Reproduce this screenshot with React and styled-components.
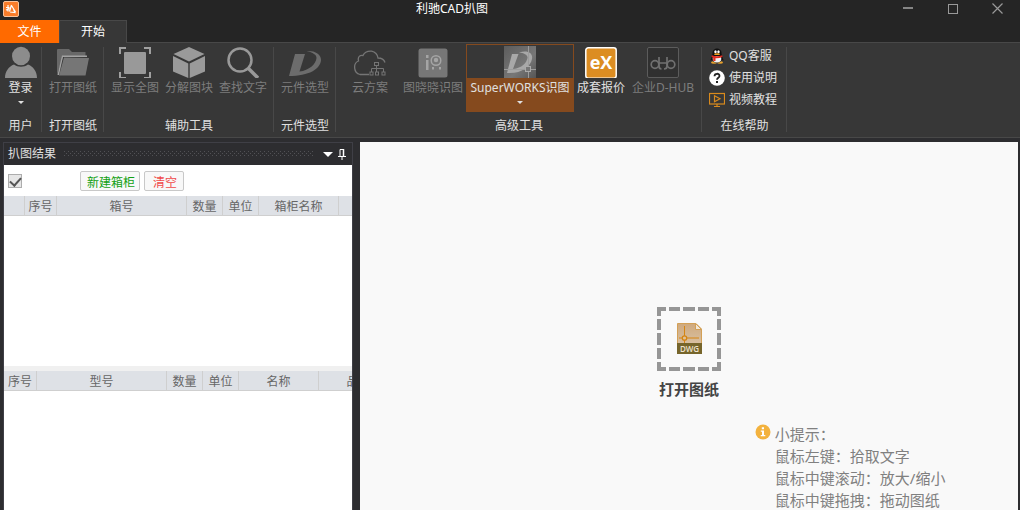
import styled, { createGlobalStyle } from "styled-components";

function AppLogo() {
    return (
        <svg width="16" height="16" viewBox="0 0 16 16" fill="none">
            <rect x="0.5" y="0.5" width="15" height="15" rx="1.5" fill="#fa7d2a" stroke="#f9c39c" />
            <path d="M3 6.500H6.500M5 4V10.500M3 9L6.500 7.500M8.500 4L6.500 10.500M8.500 4.500L12.500 11M7 11L12 11.500L10.500 8.500" stroke="#fff" strokeWidth="1.200" />
        </svg>
    )
}

function UserIcon() {
    return (
        <svg width="32" height="32" viewBox="0 0 32 32" fill="#8c8c8c">
            <ellipse cx="16" cy="10" rx="9" ry="9.3" />
            <path d="M0 32C0 25 4 20.500 9 18.500C13 21.500 19 21.500 23 18.500C28 20.500 32 25 32 32Z" />
        </svg>
    )
}

function FolderIcon() {
    return (
        <svg width="32" height="32" viewBox="0 0 32 32">
            <path d="M0 29V3.500L1 3H12L15 6H28.500V11H6L0 29Z" fill="#686868" />
            <path d="M6 11H30V9.500H5L0.500 29H2Z" fill="#a2a2a2" />
            <path d="M7 11.500L32 12L28.500 29.500H2Z" fill="#767676" />
        </svg>
    )
}

function FullViewIcon() {
    return (
        <svg width="32" height="32" viewBox="0 0 32 32">
            <rect x="5" y="6" width="22" height="22" rx="1" fill="#999" />
            <path d="M1 8V2H7M25 2H31V8M31 26V32H25M7 32H1V26" fill="none" stroke="#a0a0a0" strokeWidth="2" />
        </svg>
    )
}

function CubeIcon() {
    return (
        <svg width="32" height="32" viewBox="0 0 32 32" fill="#9a9a9a">
            <path d="M16 1L31.500 8L16 15.500L0.500 8Z" />
            <path d="M0 10L15.300 17.500V32L0 25.500Z" />
            <path d="M32 10L16.700 17.500V32L32 25.500Z" />
        </svg>
    )
}

function SearchIcon() {
    return (
        <svg width="32" height="32" viewBox="0 0 32 32" fill="none" stroke="#999">
            <circle cx="13" cy="14" r="11.500" strokeWidth="2.500" />
            <path d="M21 22L31 32" strokeWidth="3.500" />
        </svg>
    )
}

function SwooshIcon() {
    return (
        <svg width="32" height="32" viewBox="0 0 32 32" fill="#6c6c6c">
            <path d="M6 8H16L10.500 25.500C20 24.500 27 18 27.500 12C27.700 9 24 6.500 17.500 5C26 4.500 32 8 32 14C31.500 23 20 30 0 30Z" />
        </svg>
    )
}

function CloudIcon() {
    return (
        <svg width="32" height="32" viewBox="0 0 32 32" fill="none" stroke="#757575">
            <path d="M15 28.500H6C2.500 27.500 0.600 24.500 0.600 21C0.600 18 2 16 4.500 15C3.500 10.500 6 9 9 9.500C10.500 6 14 5 17.500 5.200C21 6 23.500 8.500 24 12C28 12 30 13.500 31 16.500" strokeWidth="1.300" />
            <rect x="20.500" y="16.500" width="4" height="3" />
            <path d="M22.500 19.500V26M17.500 26V22.500H29.500V26" />
            <rect x="16" y="26" width="3" height="3" />
            <rect x="21.500" y="26" width="3" height="3" />
            <rect x="28" y="26" width="3" height="3" />
        </svg>
    )
}

function RecognizeIcon() {
    return (
        <svg width="32" height="32" viewBox="0 0 32 32">
            <rect x="1.500" y="2.500" width="29" height="29" rx="2.500" fill="#777" />
            <path d="M9 9H11.500V12H9ZM9 14H11.500V24H9Z" fill="#a5a5a5" />
            <circle cx="19" cy="14.500" r="4.800" fill="none" stroke="#a5a5a5" strokeWidth="1.500" />
            <circle cx="19" cy="14" r="2.200" fill="#a5a5a5" />
            <path d="M15 21H17V23.500H15ZM22 21H24V23.500H22Z" fill="#a5a5a5" />
        </svg>
    )
}

function SuperWorksIcon() {
    return (
        <svg width="32" height="32" viewBox="0 0 32 32">
            <defs>
                <linearGradient id="plate" x1="0" y1="0" x2="1" y2="1">
                    <stop offset="0" stopColor="#5c5c5c" />
                    <stop offset="0.6" stopColor="#777" />
                    <stop offset="1" stopColor="#555" />
                </linearGradient>
            </defs>
            <rect width="32" height="32" fill="url(#plate)" />
            <path d="M8 8H14.500L9 23C18 22 22.500 17 23.500 12C24 9 20 7 15 6.500C24 4 29 7 28 13C26.500 21 17 28 3 27Z" fill="#a8a8a8" />
            <path d="M24.500 0V32M0 23.500H32" stroke="#9c9c9c" />
            <rect x="21.500" y="20.500" width="5" height="5" fill="#777" stroke="#aaa" />
        </svg>
    )
}

function QuoteIcon() {
    return (
        <svg width="32" height="32" viewBox="0 0 32 32">
            <rect x="0.800" y="1.800" width="30.400" height="30.400" rx="2.500" fill="#dc8d22" stroke="#fff" strokeWidth="1.500" />
            <text x="16" y="23" textAnchor="middle" fontFamily="Open Sans, sans-serif" fontSize="18" fontWeight="700" fill="#fff">eX</text>
        </svg>
    )
}

function HubIcon() {
    return (
        <svg width="32" height="32" viewBox="0 0 32 32" fill="none" stroke="#707070">
            <rect x="0.500" y="1.500" width="31" height="30" rx="1.500" fill="#303030" stroke="#5c5c5c" />
            <circle cx="8" cy="18.500" r="3.800" strokeWidth="1.700" />
            <path d="M12 11V20Q12 23 14.500 23M12 17H20M17 23Q20 23 20 20V11" strokeWidth="1.700" />
            <circle cx="24" cy="18.500" r="3.800" strokeWidth="1.700" />
        </svg>
    )
}

function QQIcon() {
    return (
        <svg width="16" height="16" viewBox="0 0 16 16">
            <ellipse cx="5" cy="14.500" rx="3" ry="1.300" fill="#e8a02c" />
            <ellipse cx="11" cy="14.500" rx="3" ry="1.300" fill="#e8a02c" />
            <path d="M3 9L1.200 12.500L3.500 12ZM13 9L14.800 12.500L12.500 12Z" fill="#111" />
            <ellipse cx="8" cy="9.500" rx="5.500" ry="5.200" fill="#111" />
            <ellipse cx="8" cy="10.800" rx="4.300" ry="3.800" fill="#f4f4f4" />
            <path d="M3.500 5C3.500 -1 12.500 -1 12.500 5V8H3.500Z" fill="#111" />
            <ellipse cx="6.500" cy="3.700" rx="1.200" ry="1.500" fill="#fff" />
            <ellipse cx="9.500" cy="3.700" rx="1.200" ry="1.500" fill="#fff" />
            <ellipse cx="8" cy="6.200" rx="3" ry="0.900" fill="#f0a020" />
            <path d="M2.800 7.200Q8 9.500 13.200 7.200L13.500 9Q10 10.500 6.500 10.300V13H4.200V9.800L2.500 9Z" fill="#e02b20" />
        </svg>
    )
}

function HelpIcon() {
    return (
        <svg width="16" height="16" viewBox="0 0 16 16" fill="none">
            <circle cx="8" cy="8" r="7.800" fill="#fff" />
            <path d="M5.500 6.200C5.500 3 10.500 3 10.500 6C10.500 7.800 8 7.800 8 9.700" stroke="#222" strokeWidth="1.800" />
            <rect x="7" y="11" width="2" height="2" fill="#222" />
        </svg>
    )
}

function VideoIcon() {
    return (
        <svg width="16" height="16" viewBox="0 0 16 16" fill="none" stroke="#d98a1d">
            <rect x="0.500" y="1.500" width="15" height="10.500" strokeWidth="1.200" />
            <path d="M5.500 3.800L11 6.800L5.500 9.800ZM8 12V14M5 14.500H11" strokeWidth="1.200" />
        </svg>
    )
}

function PinIcon() {
    return (
        <svg width="8" height="11" viewBox="0 0 8 11" fill="none" stroke="#fff">
            <path d="M2 7V0.500H5.500V7" />
            <path d="M5.500 0V7" strokeWidth="1.500" />
            <path d="M0 7.500H8M4 7.500V11" />
        </svg>
    )
}

function DropArea() {
    const dashes = "9 3 11 3 12 3 11 3 9"
    return (
        <svg width="64" height="64" viewBox="0 0 64 64">
            <defs>
                <linearGradient id="paper" x1="0" y1="0" x2="0" y2="1">
                    <stop offset="0" stopColor="#cfa97d" />
                    <stop offset="1" stopColor="#dccbb5" />
                </linearGradient>
            </defs>
            <g stroke="#969696" strokeWidth="4" strokeDasharray={dashes}>
                <path d="M0 2H64" />
                <path d="M0 62H64" />
                <path d="M2 0V64" />
                <path d="M62 0V64" />
            </g>
            <path d="M20.500 16.500H39L44.500 22V46.500H20.500Z" fill="url(#paper)" stroke="#d3a056" />
            <path d="M38.500 16.500V22.500H44.500Z" fill="#f3e8d8" stroke="#d3a056" />
            <path d="M27.500 19V36M22 31H42" stroke="#d58412" />
            <circle cx="27.500" cy="31" r="2.200" fill="#dfc29a" stroke="#d58412" strokeWidth="1.300" />
            <rect x="20" y="36" width="25" height="11" fill="#76652b" />
            <text x="32.500" y="44.500" textAnchor="middle" fontFamily="Open Sans, sans-serif" fontSize="8" fontWeight="600" fill="#eee3cf">DWG</text>
        </svg>
    )
}

function InfoIcon() {
    return (
        <svg width="16" height="17" viewBox="0 0 16 17">
            <circle cx="8" cy="9" r="7.500" fill="#f3b23e" />
            <path d="M6.800 4.200H9V6.200H6.800ZM5.800 7.500H9V12H10.300V13.300H5.700V12H7V8.700H5.800Z" fill="#fff" />
        </svg>
    )
}

const groups = [
    { title: "用户", items: [{ label: "登录", icon: <UserIcon />, width: 37, enabled: true, arrow: true }] },
    { title: "打开图纸", items: [{ label: "打开图纸", icon: <FolderIcon />, width: 54 }] },
    {
        title: "辅助工具",
        items: [
            { label: "显示全图", icon: <FullViewIcon />, width: 54 },
            { label: "分解图块", icon: <CubeIcon />, width: 54 },
            { label: "查找文字", icon: <SearchIcon />, width: 54 },
        ],
    },
    { title: "元件选型", items: [{ label: "元件选型", icon: <SwooshIcon />, width: 54 }] },
    {
        title: "高级工具",
        items: [
            { label: "云方案", icon: <CloudIcon />, width: 60 },
            { label: "图晓晓识图", icon: <RecognizeIcon />, width: 66 },
            { label: "SuperWORKS识图", icon: <SuperWorksIcon />, width: 108, enabled: true, active: true, arrow: true },
            { label: "成套报价", icon: <QuoteIcon />, width: 54, enabled: true },
            { label: "企业D-HUB", icon: <HubIcon />, width: 70 },
        ],
    },
]

const helpLinks = [
    { label: "QQ客服", icon: <QQIcon /> },
    { label: "使用说明", icon: <HelpIcon /> },
    { label: "视频教程", icon: <VideoIcon /> },
]

const boxColumns = [
    { label: "", width: 21 },
    { label: "序号", width: 32 },
    { label: "箱号", width: 130 },
    { label: "数量", width: 36 },
    { label: "单位", width: 36 },
    { label: "箱柜名称", width: 80 },
    { label: "", width: 80 },
]

const partColumns = [
    { label: "序号", width: 33 },
    { label: "型号", width: 130 },
    { label: "数量", width: 36 },
    { label: "单位", width: 36 },
    { label: "名称", width: 80 },
    { label: "品牌", width: 80 },
]

function Grid({ columns }) {
    return (
        <Table>
            <thead>
                <tr>
                    {columns.map((col, i) => (
                        <HeadCell key={i} $width={col.width}>{col.label}</HeadCell>
                    ))}
                </tr>
            </thead>
        </Table>
    )
}

export default function App() {
    return (
        <Window>
            <GlobalStyle />
            <TitleBar>
                <LogoBox><AppLogo /></LogoBox>
                <Title>利驰CAD扒图</Title>
                <WindowButton aria-label="最小化">
                    <svg width="10" height="11" viewBox="0 0 10 11"><path d="M0 5H10" stroke="#858585" strokeWidth="2" /></svg>
                </WindowButton>
                <WindowButton aria-label="最大化">
                    <svg width="10" height="10" viewBox="0 0 10 10"><rect x="0.500" y="0.500" width="9" height="9" fill="none" stroke="#999" /></svg>
                </WindowButton>
                <WindowButton aria-label="关闭">
                    <svg width="11" height="11" viewBox="0 0 11 11"><path d="M0.500 0.500L10.500 10.500M10.500 0.500L0.500 10.500" stroke="#999" strokeWidth="1.200" /></svg>
                </WindowButton>
            </TitleBar>

            <TabRow>
                <FileTab>文件</FileTab>
                <StartTab>开始</StartTab>
            </TabRow>

            <Ribbon>
                {groups.map((group) => (
                    <Group key={group.title}>
                        <Tools>
                            {group.items.map((item) => (
                                <ToolButton key={item.label} $width={item.width} $active={item.active} disabled={!item.enabled}>
                                    <ToolIcon>{item.icon}</ToolIcon>
                                    <ToolText $active={item.active}>
                                        {item.label}
                                        {item.arrow && <Arrow $size={3} />}
                                    </ToolText>
                                </ToolButton>
                            ))}
                        </Tools>
                        <Caption>{group.title}</Caption>
                    </Group>
                ))}
                <Group>
                    <HelpList>
                        {helpLinks.map((link) => (
                            <HelpLink key={link.label} href="#">{link.icon}{link.label}</HelpLink>
                        ))}
                    </HelpList>
                    <Caption>在线帮助</Caption>
                </Group>
            </Ribbon>

            <Workspace>
                <Panel>
                    <PanelHeader>
                        扒图结果
                        <Grip />
                        <PanelButton aria-label="菜单"><Arrow $size={5} /></PanelButton>
                        <PanelButton aria-label="固定"><PinIcon /></PanelButton>
                    </PanelHeader>
                    <PanelTools>
                        <CheckBox type="checkbox" aria-label="全选" defaultChecked />
                        <SmallButton $color="#12a012" $width={60}>新建箱柜</SmallButton>
                        <SmallButton $color="#f04a4a" $width={40}>清空</SmallButton>
                    </PanelTools>
                    <TablePane $grow={55}><Grid columns={boxColumns} /></TablePane>
                    <Splitter />
                    <TablePane $grow={45}><Grid columns={partColumns} /></TablePane>
                </Panel>

                <Canvas>
                    <OpenButton>
                        <DropArea />
                        打开图纸
                    </OpenButton>
                    <Tips>
                        <InfoIcon />
                        <div>
                            <TipLine>小提示：</TipLine>
                            <TipLine>鼠标左键：拾取文字</TipLine>
                            <TipLine>鼠标中键滚动：放大/缩小</TipLine>
                            <TipLine>鼠标中键拖拽：拖动图纸</TipLine>
                        </div>
                    </Tips>
                </Canvas>
            </Workspace>
        </Window>
    )
}

const GlobalStyle = createGlobalStyle`
    * {
        box-sizing: border-box;
    }
    body {
        margin: 0;
        background: #2d2d30;
    }
    body, button, input {
        font-family: "Noto Sans", "Noto Sans CJK SC", sans-serif;
        font-size: 12px;
        line-height: 18px;
    }
    button {
        padding: 0;
        border: 0;
        background: none;
        color: inherit;
        white-space: nowrap;
    }
    svg {
        display: block;
        flex-shrink: 0;
    }
`

const Window = styled.div`
    display: flex;
    flex-direction: column;
    height: 100vh;
    overflow: hidden;
    color: #e0e0e0;
`

const TitleBar = styled.header`
    display: flex;
    height: 20px;
    background: #252525;
`

const LogoBox = styled.div`
    padding: 1px 0 0 3px;
`

const Title = styled.div`
    flex: 1;
    text-align: center;
    color: #fff;
`

const WindowButton = styled.button`
    display: flex;
    align-items: center;
    justify-content: center;
    width: 45px;
    height: 17px;
`

const TabRow = styled.nav`
    display: flex;
    height: 23px;
    background: #252525;
    border-bottom: 1px solid #484848;
`

const FileTab = styled.button`
    width: 59px;
    height: 23px;
    background: #ff6a00;
    color: #fff;
`

const StartTab = styled.button`
    width: 68px;
    height: 23px;
    background: #373737;
    border: solid #484848;
    border-width: 1px 1px 0;
    color: #fff;
`

const Ribbon = styled.div`
    display: flex;
    height: 95px;
    flex-shrink: 0;
    background: #373737;
    border-bottom: 1px solid #484848;
`

const Group = styled.section`
    position: relative;
    margin-right: 1px;
    padding: 1px 3px 2px 4px;
    &:first-child {
        padding-left: 2px;
        padding-right: 2px;
    }
    &::after {
        content: "";
        position: absolute;
        top: 4px;
        right: -1px;
        bottom: 5px;
        width: 1px;
        background: #484848;
    }
`

const Tools = styled.div`
    display: flex;
`

const ToolButton = styled.button`
    display: flex;
    flex-direction: column;
    width: ${(p) => p.$width}px;
    height: 68px;
    border: 1px solid ${(p) => (p.$active ? "#854a1e" : "transparent")};
    color: #e0e0e0;
    &:disabled {
        color: #7d7d7d;
    }
`

const ToolIcon = styled.span`
    display: flex;
    align-items: flex-end;
    justify-content: center;
    width: 100%;
    height: 33px;
`

const ToolText = styled.span`
    display: flex;
    flex-direction: column;
    align-items: center;
    gap: 4px;
    width: 100%;
    flex: 1;
    padding-top: 1px;
    background: ${(p) => (p.$active ? "#854a1e" : "none")};
`

const Arrow = styled.span`
    width: 0;
    height: 0;
    border: ${(p) => p.$size}px solid transparent;
    border-top-color: currentColor;
    border-bottom: 0;
`

const Caption = styled.div`
    margin-top: 5px;
    text-align: center;
`

const HelpList = styled.div`
    display: flex;
    flex-direction: column;
    gap: 4px;
    height: 68px;
    padding: 3px 6px 0 3px;
`

const HelpLink = styled.a`
    display: flex;
    align-items: center;
    gap: 4px;
    color: inherit;
    text-decoration: none;
`

const Workspace = styled.div`
    display: flex;
    flex: 1;
    gap: 7px;
    min-height: 0;
    padding: 4px 2px 0 3px;
    background: #2d2d30;
`

const Panel = styled.aside`
    display: flex;
    flex-direction: column;
    width: 350px;
    flex-shrink: 0;
    border: solid #3f3f46;
    border-width: 1px 1px 0;
`

const PanelHeader = styled.div`
    display: flex;
    align-items: center;
    height: 22px;
    padding: 0 3px 0 4px;
`

const Grip = styled.div`
    flex: 1;
    height: 6px;
    margin: 0 8px;
    background-image: conic-gradient(at 1px 1px, transparent 75%, #515155 0), conic-gradient(at 1px 1px, transparent 75%, #515155 0);
    background-position: 0 0, 2px 2px;
    background-size: 4px 4px;
`

const PanelButton = styled.button`
    display: flex;
    align-items: center;
    justify-content: center;
    width: 14px;
    height: 16px;
    color: #fff;
`

const PanelTools = styled.div`
    display: flex;
    align-items: center;
    gap: 4px;
    height: 31px;
    padding: 0 4px;
    background: #fff;
`

const CheckBox = styled.input`
    appearance: none;
    display: flex;
    justify-content: center;
    width: 14px;
    height: 14px;
    margin: 0 54px 0 0;
    border: 1px solid #adadad;
    background: #e6e6e6;
    &:checked::after {
        content: "";
        width: 5px;
        height: 9px;
        border: solid #555;
        border-width: 0 2px 2px 0;
        transform: rotate(42deg);
    }
`

const SmallButton = styled.button`
    width: ${(p) => p.$width}px;
    height: 20px;
    padding: 2px 0 0 2px;
    border: 1px solid #c8c8c8;
    border-radius: 2px;
    background: #f8f8f8;
    color: ${(p) => p.$color};
`

const TablePane = styled.div`
    flex: ${(p) => p.$grow} 1 0;
    min-height: 0;
    overflow: hidden;
    background: #fff;
`

const Splitter = styled.div`
    height: 5px;
    background: #f0f0f0;
`

const Table = styled.table`
    border-spacing: 0;
    table-layout: fixed;
    width: max-content;
`

const HeadCell = styled.th`
    width: ${(p) => p.$width}px;
    min-width: ${(p) => p.$width}px;
    height: 20px;
    padding: 2px 0 0;
    border: solid #cfcfcf;
    border-width: 0 1px 1px 0;
    background: #dee1e6;
    color: #666;
    font-weight: 400;
    line-height: 17px;
`

const Canvas = styled.main`
    flex: 1;
    padding-top: 165px;
    overflow: hidden;
    background: #f9f9f9;
`

const OpenButton = styled.button`
    display: flex;
    flex-direction: column;
    align-items: center;
    gap: 7px;
    margin: 0 auto;
    color: #444;
    font-size: 15px;
    font-weight: 700;
    line-height: 22px;
`

const Tips = styled.div`
    display: flex;
    gap: 4px;
    margin: 23px 0 0 60%;
    color: #808080;
    font-size: 15px;
    line-height: 22px;
`

const TipLine = styled.div`
    white-space: nowrap;
`
